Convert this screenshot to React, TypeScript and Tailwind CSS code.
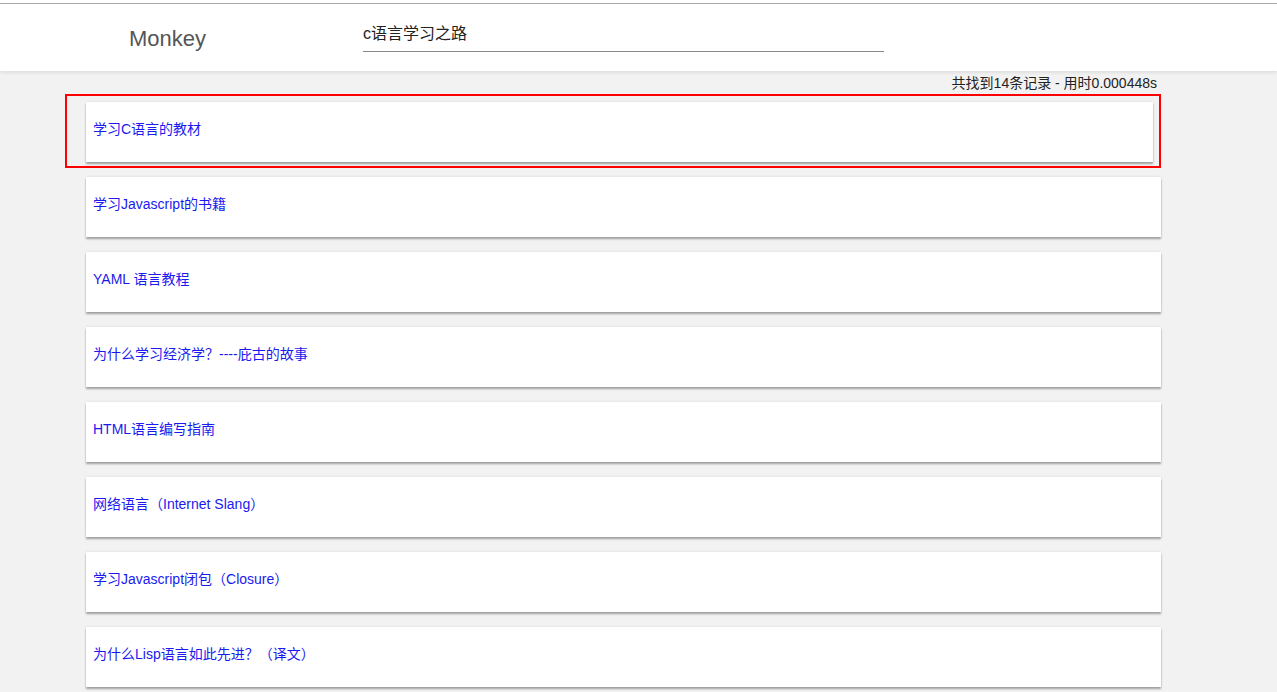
const results = [
  "学习C语言的教材",
  "学习Javascript的书籍",
  "YAML 语言教程",
  "为什么学习经济学？----庇古的故事",
  "HTML语言编写指南",
  "网络语言（Internet Slang）",
  "学习Javascript闭包（Closure）",
  "为什么Lisp语言如此先进？（译文）",
]

export default function App() {
  return (
    <div
      className="min-h-screen bg-[#f2f2f2] text-[#222]"
      style={{ fontFamily: '"Liberation Sans", "Noto Sans CJK SC", sans-serif' }}
    >
      {/* header */}
      <div className="bg-white pt-[3px]">
        <div className="border-t border-[#a8a8a8] h-[68px] flex items-start shadow-[0_2px_3px_rgba(0,0,0,0.08)] relative">
          <div className="w-[363px] pl-[129px] pt-[21px] text-[22px] leading-[28px] text-[#555]">
            Monkey
          </div>
          <div className="w-[521px] mt-[19px] border-b border-[#8a8a8a] pb-[6px] text-[16px] leading-[22px] text-[#222]">
            c语言学习之路
          </div>
        </div>
      </div>

      {/* results */}
      <div className="ml-[86px] w-[1075px] pb-[20px]">
        <div className="h-[31px] flex items-start justify-end pr-[4px] pt-[4px] text-[14px] leading-[16px] text-[#222]">
          共找到14条记录 - 用时0.000448s
        </div>

        <div className="flex flex-col gap-[15px]">
          {results.map((title, i) => (
            <div key={i} className="relative">
              <div
                className={
                  "h-[60px] bg-white pl-[7px] pt-[18px] text-[14px] leading-[18px] text-[#1a1aee] shadow-[0_2px_2px_rgba(0,0,0,0.35),0_-1px_2px_rgba(0,0,0,0.05)] " +
                  (i === 0 ? "w-[1067px]" : "w-full")
                }
              >
                {title}
              </div>
              {i === 0 && (
                <div className="absolute left-[-21px] top-[-8px] w-[1096px] h-[74px] border-2 border-[#ff0000] pointer-events-none" />
              )}
            </div>
          ))}
        </div>
      </div>
    </div>
  )
}
